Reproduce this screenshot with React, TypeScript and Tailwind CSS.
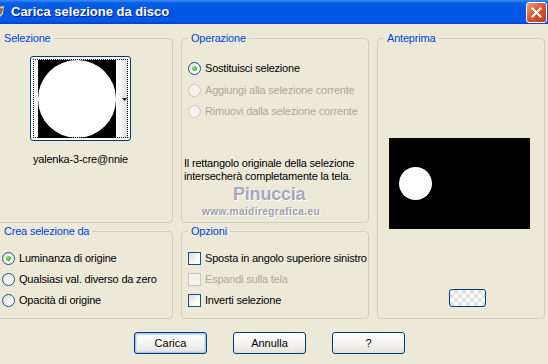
import React from "react";

const font = "font-['Liberation_Sans',Arial,sans-serif]";

function Radio({ checked = false, disabled = false }: { checked?: boolean; disabled?: boolean }) {
  return (
    <span
      className={`flex h-[13px] w-[13px] shrink-0 items-center justify-center rounded-full border ${
        disabled
          ? "border-[#cac8bb] bg-[#f4f3ee]"
          : "border-[#1c5180] bg-[linear-gradient(135deg,#dcd9cf,#ffffff_70%)]"
      }`}
    >
      {checked && (
        <span className="h-[5px] w-[5px] rounded-full bg-[radial-gradient(circle_at_35%_35%,#8ae27f,#21a121)]" />
      )}
    </span>
  );
}

function Check({ disabled = false }: { disabled?: boolean }) {
  return (
    <span
      className={`h-[13px] w-[13px] shrink-0 border ${
        disabled
          ? "border-[#cac8bb] bg-[#f4f3ee]"
          : "border-[#1c5180] bg-[linear-gradient(135deg,#dcdbd5,#ffffff_75%)]"
      }`}
    />
  );
}

function Group({
  title,
  className,
  children,
}: {
  title: string;
  className: string;
  children?: React.ReactNode;
}) {
  return (
    <fieldset className={`rounded-[4px] border border-[#d0d0bf] ${className}`}>
      <legend className="ml-[6px] px-[3px] text-[11px] leading-[13px] text-[#0046d5]">{title}</legend>
      {children}
    </fieldset>
  );
}

function Option({
  label,
  checked,
  disabled,
  box,
}: {
  label: string;
  checked?: boolean;
  disabled?: boolean;
  box?: boolean;
}) {
  return (
    <div className="flex h-[21px] items-center gap-[4px]">
      {box ? <Check disabled={disabled} /> : <Radio checked={checked} disabled={disabled} />}
      <span className={disabled ? "text-[#aca899]" : "text-black"}>{label}</span>
    </div>
  );
}

function XpButton({ label, isDefault = false }: { label: string; isDefault?: boolean }) {
  return (
    <button
      className={`flex h-[22px] w-[73px] items-center justify-center rounded-[3px] border border-[#003c74] bg-[linear-gradient(180deg,#ffffff,#f3f2ee_60%,#e3e0d6)] text-[11px] text-black ${
        isDefault ? "shadow-[inset_0_0_0_1px_#aac6f5,inset_0_0_0_2px_#cfdff9]" : ""
      }`}
    >
      {label}
    </button>
  );
}

export default function App() {
  return (
    <div
      className={`flex h-[364px] w-[548px] flex-col overflow-hidden bg-[#ece9d8] text-[11px] tracking-[-0.2px] ${font}`}
    >
      {/* title bar */}
      <div className="flex h-[24px] shrink-0 items-center bg-[linear-gradient(180deg,#3d8ef7_0%,#0a5fe6_12%,#0055e5_50%,#075ae9_85%,#0043cf_100%)]">
        <svg width="12" height="14" viewBox="0 0 12 14" className="-ml-[7px]">
          <path d="M1 3 L11 1 L10 9 L6 13 L2 9 Z" fill="#d9d2b8" />
          <path d="M3 4 L10 3 L9 8 L6 11 L3 8 Z" fill="#cc3b2a" />
          <path d="M5 5 L9 5 L8 8 L6 9 Z" fill="#3c9b3a" />
        </svg>
        <span className="ml-[6px] text-[13px] font-bold tracking-normal text-white [text-shadow:1px_1px_0_#0a1f8c]">
          Carica selezione da disco
        </span>
        <div className="ml-auto mr-[1px] flex h-[21px] w-[21px] items-center justify-center rounded-[3px] border border-white bg-[linear-gradient(135deg,#ec9c7b,#d9552f_50%,#c03a16)]">
          <svg width="11" height="11" viewBox="0 0 11 11">
            <path d="M1.5 1.5 L9.5 9.5 M9.5 1.5 L1.5 9.5" stroke="#fff" strokeWidth="2" strokeLinecap="square" />
          </svg>
        </div>
      </div>

      {/* body */}
      <div className="mt-[8px] flex gap-[8px]">
        <div className="-ml-[6px] flex w-[179px] flex-col gap-[2px]">
          <Group title="Selezione" className="h-[191px]">
            <div className="ml-[35px] mt-[11px] flex w-[101px] flex-col items-center">
              <div className="relative flex h-[85px] w-[101px] rounded-[3px] border border-[#003c74] bg-white">
                <div className="absolute inset-[2px] border border-dotted border-black" />
                <div className="ml-[7px] mt-[3px] flex h-[78px] w-[78px] items-center justify-center bg-black">
                  <div className="h-[78px] w-[78px] rounded-full bg-white" />
                </div>
                <div className="mt-[3px] flex h-[78px] w-[12px] items-center justify-end bg-[linear-gradient(90deg,#ffffff,#f2f2f0_50%,#d8d8d4)] pr-[1px]">
                  <svg width="5" height="3" viewBox="0 0 5 3">
                    <path d="M0 0 H5 L2.5 3 Z" fill="#000" />
                  </svg>
                </div>
              </div>
              <div className="mt-[12px] leading-[13px] text-black">yalenka-3-cre@nnie</div>
            </div>
          </Group>
          <Group title="Crea selezione da" className="h-[94px]">
            <div className="ml-[7px] mt-[10px] flex flex-col">
              <Option label="Luminanza di origine" checked />
              <Option label="Qualsiasi val. diverso da zero" />
              <Option label="Opacità di origine" />
            </div>
          </Group>
        </div>

        <div className="flex w-[188px] flex-col gap-[2px]">
          <Group title="Operazione" className="h-[191px]">
            <div className="ml-[6px] mt-[13px] flex flex-col">
              <Option label="Sostituisci selezione" checked />
              <div className="h-[22px] flex items-center">
                <Option label="Aggiungi alla selezione corrente" disabled />
              </div>
              <Option label="Rimuovi dalla selezione corrente" disabled />
            </div>
            <p className="ml-[2px] mt-[35px] leading-[13px] text-black">
              Il rettangolo originale della selezione
              <br />
              intersecherà completamente la tela.
            </p>
            <div className="ml-[20px] flex w-[124px] flex-col items-start leading-none tracking-normal text-[#a8a7bd] [text-shadow:1px_1px_0_#ffffff]">
              <span className="ml-[31px] mt-[2px] text-[18px] font-bold tracking-[-0.2px]">Pinuccia</span>
              <span className="mt-[4px] text-[10px] font-bold tracking-[0.45px] text-[#a09fae]">
                www.maidiregrafica.eu
              </span>
            </div>
          </Group>
          <Group title="Opzioni" className="h-[94px]">
            <div className="ml-[6px] mt-[10px] flex flex-col">
              <Option box label="Sposta in angolo superiore sinistro" />
              <Option box disabled label="Espandi sulla tela" />
              <Option box label="Inverti selezione" />
            </div>
          </Group>
        </div>

        <Group title="Anteprima" className="h-[287px] w-[168px]">
          <div className="ml-[11px] mt-[93px] flex h-[91px] w-[141px] items-center bg-black pl-[10px]">
            <div className="h-[33px] w-[33px] rounded-full bg-white" />
          </div>
          <div className="ml-[71px] mt-[60px] h-[18px] w-[37px] rounded-[3px] border border-[#003c74] bg-[repeating-conic-gradient(#e2e2e2_0_25%,#fbfbfb_0_50%)] bg-[length:8px_8px]" />
        </Group>
      </div>

      {/* buttons */}
      <div className="ml-[134px] mt-[13px] flex gap-[26px] tracking-normal">
        <XpButton label="Carica" isDefault />
        <XpButton label="Annulla" />
        <XpButton label="?" />
      </div>
    </div>
  );
}
